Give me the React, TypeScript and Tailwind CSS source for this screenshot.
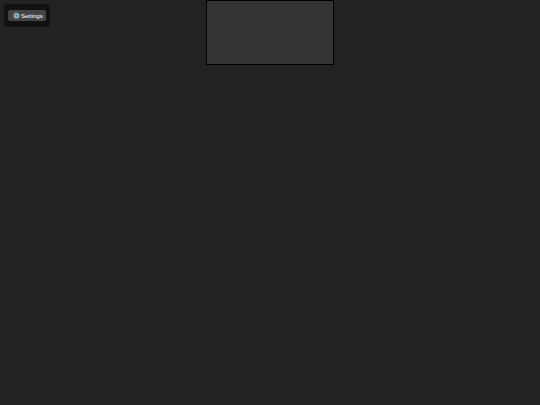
const GearIcon = () => (
  <svg viewBox="0 0 24 24" className="w-[7px] h-[7px] shrink-0" fill="none" aria-hidden="true">
    <circle cx="12" cy="12" r="9.5" stroke="#82aec0" strokeWidth="4" strokeDasharray="4 3.46" />
    <circle cx="12" cy="12" r="6.5" stroke="#8fbfd2" strokeWidth="5" />
    <path d="M12 5v14M5 12h14" stroke="#82aec0" strokeWidth="3" />
    <circle cx="12" cy="12" r="3" fill="#3c8ba0" />
  </svg>
);

const Toolbar = () => {
  return (
    <div className="absolute top-1 left-1 rounded bg-[#111111] px-1 py-[6px] flex">
      <button
        type="button"
        className="h-[11px] pl-[5px] pr-[3px] rounded-xs bg-[#444444] text-white text-[6px] leading-none flex items-center gap-px"
      >
        <GearIcon />
        Settings
      </button>
    </div>
  );
};

const App = () => {
  return (
    <div className="relative min-h-screen bg-[#222222] font-['Liberation_Sans',sans-serif]">
      <Toolbar />
      <main className="flex justify-center">
        <canvas width={126} height={63} className="block box-content border border-black bg-[#333333]" />
      </main>
    </div>
  );
};

export default App;
